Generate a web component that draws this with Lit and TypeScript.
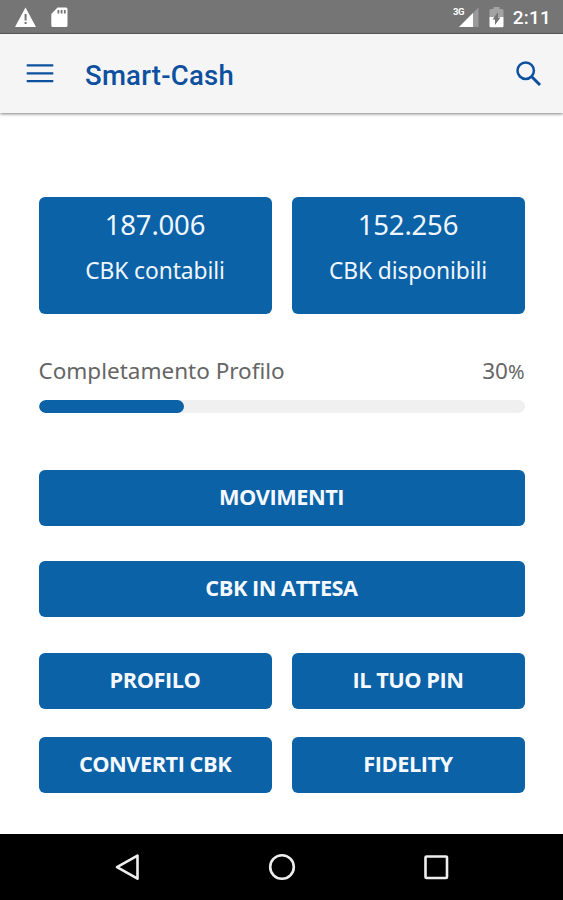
import { LitElement, html, css, svg } from "lit";
import { customElement, property } from "lit/decorators.js";

@customElement("status-bar")
class StatusBar extends LitElement {
  static styles = css`
    :host { display: flex; align-items: center; height: 34px; box-sizing: border-box; background: #757575; border-bottom: 1px solid #5c5c5c; color: #fff; padding: 1px 12px 0 14px; font: 500 19px/32px Roboto, sans-serif; }
    svg { display: block; flex: none; }
    .card { margin-left: 14px; }
    .signal { margin-left: auto; }
    .battery { margin-left: 10px; }
    .time { margin: 2px 0 0 9px; letter-spacing: 0.2px; }
    .net { font: 700 9.5px Roboto, sans-serif; letter-spacing: -0.4px; }
  `;
  render() {
    return html`
      <svg width="23" height="22" viewBox="0 0 23 22"><path d="M11.5 1.5 22 21H1z" fill="#fff"/><path d="M10.6 8h2v6.500h-2zM10.600 16h2v2h-2z" fill="#757575"/></svg>
      <svg class="card" width="17" height="22" viewBox="0 0 17 22"><path d="M6.500 1.500H15a1.500 1.500 0 0 1 1.500 1.500v16.500a1.500 1.500 0 0 1-1.500 1.500H1.800a1.500 1.500 0 0 1-1.500-1.500V8z" fill="#fff"/><path d="M6.500 4h1.800v3.500H6.500zM9.700 4h1.800v3.500H9.700zM12.900 4h1.800v3.500h-1.800z" fill="#757575"/></svg>
      <svg class="signal" width="26" height="24" viewBox="0 0 26 24"><path d="M25.500 2.500v19.500H6z" fill="#9a9a9a"/><path d="M20 8v14H6z" fill="#fff"/><text class="net" x="0" y="10" fill="#fff">3G</text></svg>
      <svg class="battery" width="15" height="22" viewBox="0 0 15 22"><path d="M4.500 1h6v2H13a1.500 1.500 0 0 1 1.500 1.500V11H.5V4.500A1.500 1.500 0 0 1 2 3h2.500z" fill="#a3a3a3"/><path d="M.5 11h14v9a1.200 1.200 0 0 1-1.200 1.200H1.700A1.200 1.200 0 0 1 .5 20z" fill="#fff"/><path d="M9 6v5.500h2.500L6 19v-5.500H3.500z" fill="#757575"/></svg>
      <span class="time">2:11</span>
    `;
  }
}

@customElement("app-header")
class AppHeader extends LitElement {
  static styles = css`
    :host { display: flex; align-items: center; height: 79px; box-sizing: border-box; background: #f5f5f5; box-shadow: 0 1px 3px rgba(0,0,0,.5); padding: 0 21px 0 26px; color: #0d50a0; position: relative; }
    svg { display: block; flex: none; }
    .title { margin: 4px auto 0 31px; font: 500 27.5px/36px Roboto, sans-serif; letter-spacing: 0.25px; white-space: nowrap; }
  `;
  render() {
    return html`
      <svg width="28" height="22" viewBox="0 0 28 22"><path d="M.7 2.300h26.600M.7 10.300h26.600M.7 18.100h26.600" stroke="currentColor" stroke-width="2.300"/></svg>
      <span class="title">Smart-Cash</span>
      <svg width="26" height="26" viewBox="0 0 26 26" fill="none" stroke="currentColor"><circle cx="9.700" cy="9.700" r="8.200" stroke-width="2.500"/><path d="M15.500 15.500 24 24" stroke-width="3"/></svg>
    `;
  }
}

@customElement("balance-card")
class BalanceCard extends LitElement {
  @property() amount = "";
  @property() label = "";
  static styles = css`
    :host { display: block; height: 116.5px; box-sizing: border-box; padding-top: 9px; border-radius: 6px; background: #0b62a6; color: #f0f6ff; text-align: center; font-family: "Noto Sans", sans-serif; white-space: nowrap; }
    .amount { font-size: 27.5px; line-height: 38px; letter-spacing: -0.2px; }
    .label { font-size: 22.8px; line-height: 32px; margin-top: 11px; letter-spacing: -0.1px; }
  `;
  render() {
    return html`<div class="amount">${this.amount}</div><div class="label">${this.label}</div>`;
  }
}

@customElement("progress-meter")
class ProgressMeter extends LitElement {
  @property() label = "";
  @property({ type: Number }) value = 0;
  static styles = css`
    :host { display: block; font: 22.5px/32px "Noto Sans", sans-serif; color: #666; }
    .row { display: flex; justify-content: space-between; }
    .sign { font-size: 20px; }
    .track { height: 13.5px; margin-top: 12px; border-radius: 7px; background: #f0f0f0; overflow: hidden; }
    .fill { height: 100%; border-radius: 7px; background: #0b62a6; }
  `;
  render() {
    return html`
      <div class="row"><span>${this.label}</span><span>${this.value}<span class="sign">%</span></span></div>
      <div class="track"><div class="fill" style="width:${this.value}%"></div></div>
    `;
  }
}

@customElement("nav-bar")
class NavBar extends LitElement {
  static styles = css`
    :host { display: flex; justify-content: space-between; align-items: center; height: 66.5px; box-sizing: border-box; background: #000; padding: 0 113px; }
    svg { display: block; }
  `;
  render() {
    const shapes = [
      svg`<path d="M24.500 2.700v23L4 14.200z"/>`,
      svg`<circle cx="14" cy="14" r="11.800"/>`,
      svg`<rect x="3.500" y="3.500" width="21.500" height="21.500" rx="1"/>`,
    ];
    return shapes.map((s) => html`<svg width="28" height="28" viewBox="0 0 28 28" fill="none" stroke="#eee" stroke-width="2.600" stroke-linejoin="round">${s}</svg>`);
  }
}

@customElement("app-root")
class AppRoot extends LitElement {
  static styles = css`
    :host { display: flex; flex-direction: column; height: 900px; background: #fff; overflow: hidden; }
    main { flex: 1; padding: 84px 38.5px 0; }
    .pair { display: grid; grid-template-columns: 1fr 1fr; column-gap: 20px; row-gap: 28.5px; }
    progress-meter { margin: 41px 0 56.5px; }
    .action { display: block; width: 100%; height: 56px; padding: 0 0 2px; border: 0; border-radius: 6px; background: #0b62a6; color: #f5f9ff; font: 700 21.800px/30px "Open Sans", sans-serif; letter-spacing: -0.5px; white-space: nowrap; }
    .wide { margin-bottom: 35.5px; }
  `;
  render() {
    return html`
      <status-bar></status-bar>
      <app-header></app-header>
      <main>
        <div class="pair">
          <balance-card amount="187.006" label="CBK contabili"></balance-card>
          <balance-card amount="152.256" label="CBK disponibili"></balance-card>
        </div>
        <progress-meter label="Completamento Profilo" value="30"></progress-meter>
        ${["MOVIMENTI", "CBK IN ATTESA"].map((t) => html`<button class="action wide">${t}</button>`)}
        <div class="pair">
          ${["PROFILO", "IL TUO PIN", "CONVERTI CBK", "FIDELITY"].map((t) => html`<button class="action">${t}</button>`)}
        </div>
      </main>
      <nav-bar></nav-bar>
    `;
  }
}
